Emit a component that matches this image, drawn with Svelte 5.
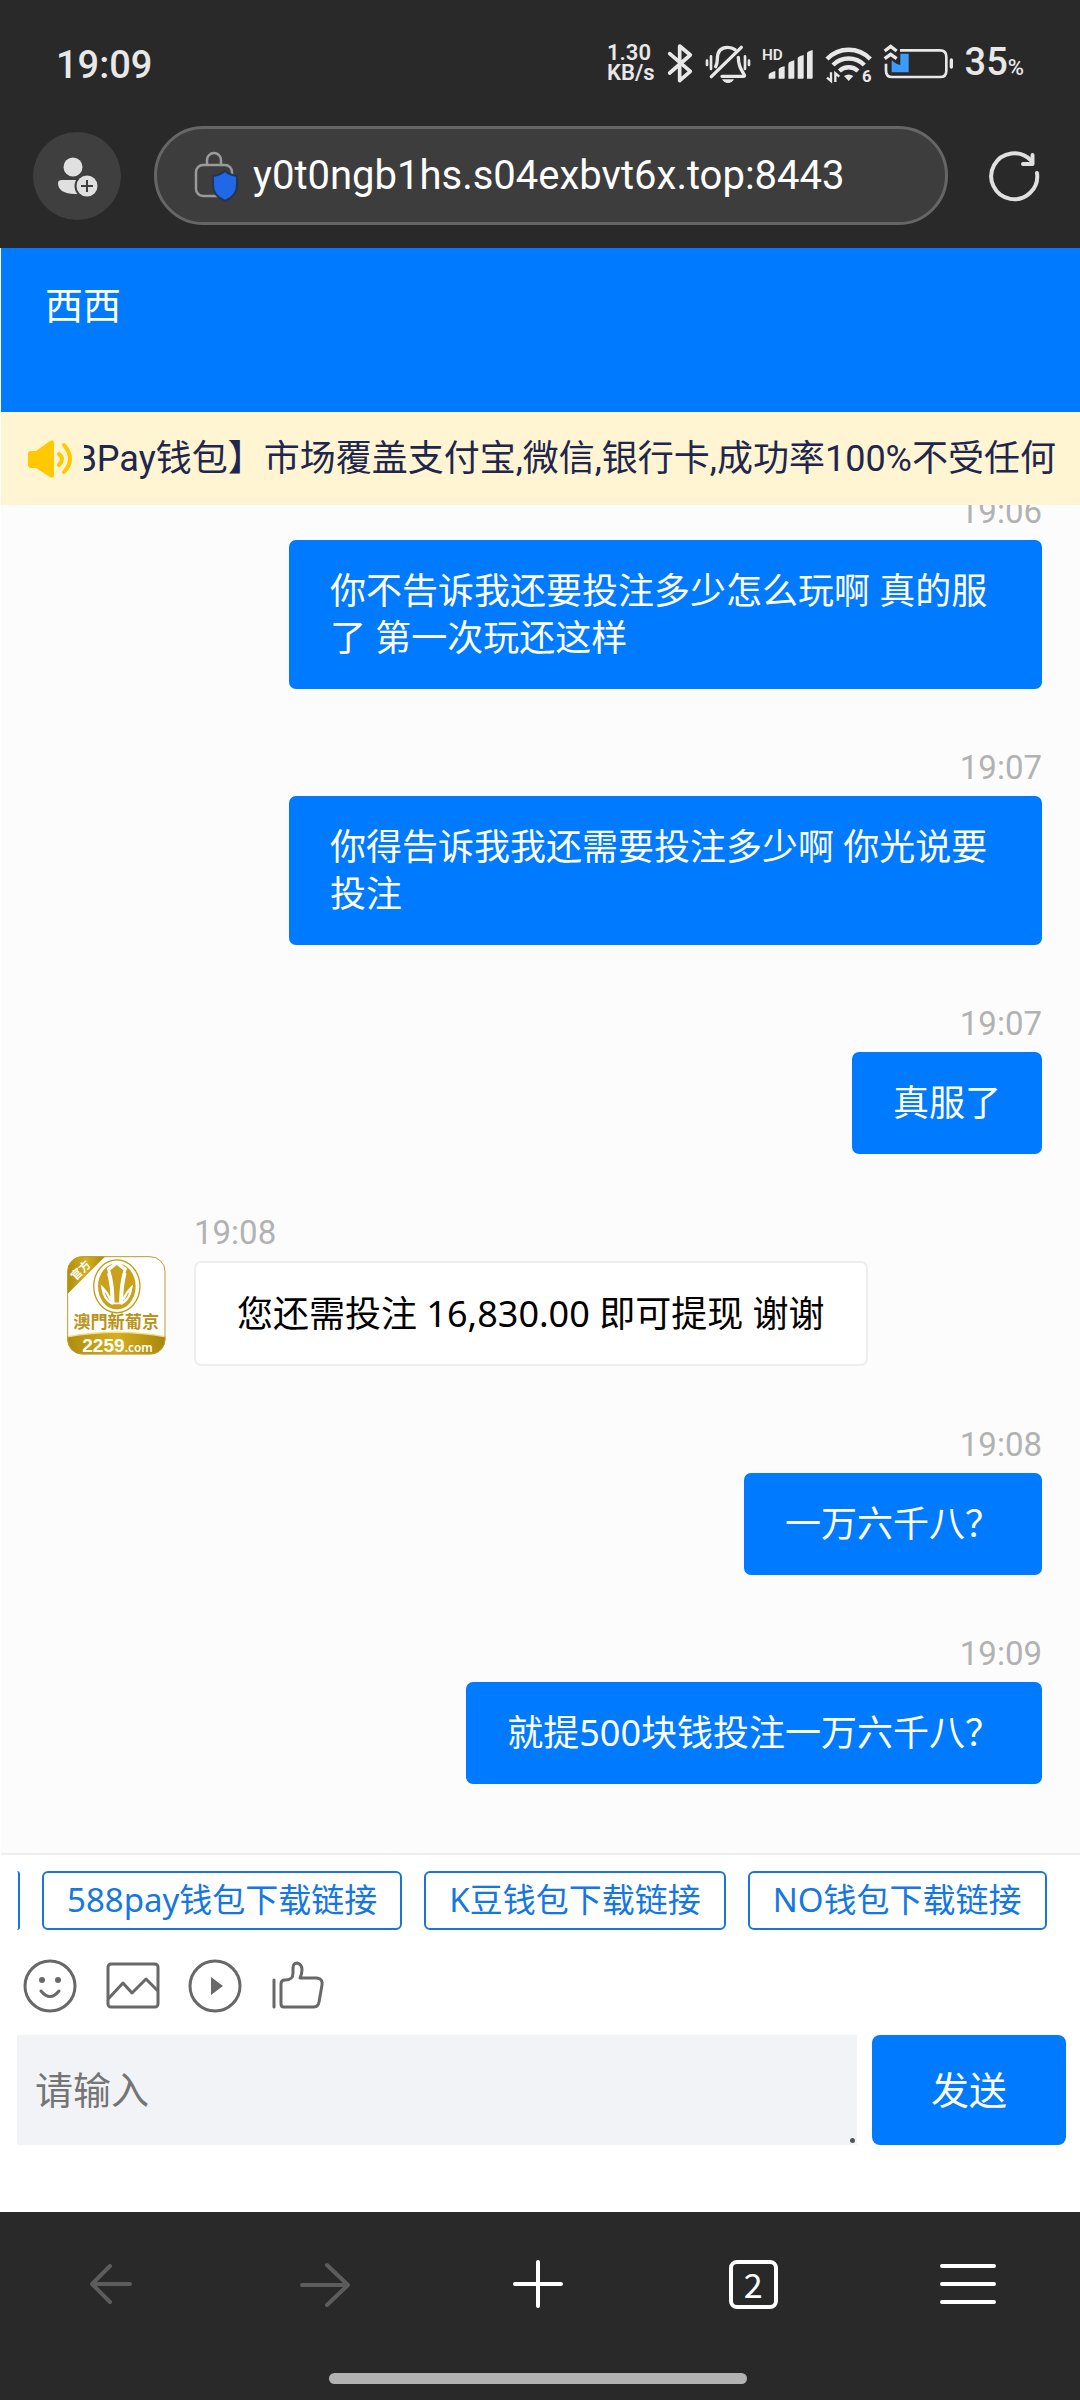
<script>
  const messages = [
    { time: '19:06', text: '你不告诉我还要投注多少怎么玩啊 真的服了 第一次玩还这样', mine: true },
    { time: '19:07', text: '你得告诉我我还需要投注多少啊 你光说要投注', mine: true },
    { time: '19:07', text: '真服了', mine: true },
    { time: '19:08', text: '您还需投注 16,830.00 即可提现 谢谢', mine: false },
    { time: '19:08', text: '一万六千八？', mine: true },
    { time: '19:09', text: '就提500块钱投注一万六千八？', mine: true }
  ];
  const links = ['588pay钱包下载链接', 'K豆钱包下载链接', 'NO钱包下载链接'];
  let draft = $state('');
</script>

<div class="screen">
  <header class="browser">
    <div class="status">
      <time class="clock">19:09</time>
      <div class="indicators">
        <div class="speed"><span>1.30</span><span>KB/s</span></div>
        <svg width="28" height="40" viewBox="246 70 84 120" fill="none" stroke="#e8e8e8" stroke-width="11" stroke-linecap="round" stroke-linejoin="round" aria-hidden="true">
          <path d="M257 102 319 155 287 183V79L319 106 257 160" />
        </svg>
        <svg width="46" height="40" viewBox="369 70 138 120" fill="none" stroke="#e8e8e8" stroke-width="10" stroke-linecap="round" aria-hidden="true">
          <path d="M401 141Q406 132 406 118C406 92 420 83 437 83Q450 83 459 90" />
          <path d="M469 113C469 135 475 146 487 166Q489 170 484 170H420" stroke-linejoin="round" />
          <path d="M388 171 478 83" />
          <path d="M420 179H456Q450 190 438 190T420 179Z" fill="#e8e8e8" stroke="none" />
          <path d="M375 123V136M387 110V148M489 110V148M501 123V136" stroke-width="8" />
        </svg>
        <svg width="52" height="40" viewBox="538 70 156 120" fill="#e8e8e8" aria-hidden="true">
          <text x="538" y="120" class="hd">HD</text>
          <path d="M558 177V165Q560 159 578 154V174Q578 177 575 177ZM588 177V149Q590 143 606 140V174Q606 177 603 177ZM617 177V133Q618 126 635 122V174Q635 177 632 177ZM645 177V116Q646 110 663 106V174Q663 177 660 177ZM673 177V101Q674 95 690 91V174Q690 177 687 177Z" />
        </svg>
        <svg width="48" height="40" viewBox="726 70 144 120" fill="none" stroke="#e8e8e8" stroke-width="13" aria-hidden="true">
          <path d="M732 118C768 81 826 81 862 118" />
          <path d="M750 136C776 110 818 110 844 136" />
          <path d="M769 154C785 139 809 139 825 154" />
          <path d="M783 169Q797 160 811 169L797 184Z" fill="#e8e8e8" stroke="none" />
          <path d="M744 158V184L732 174M757 187V161L769 171" stroke-width="7" />
          <text x="837" y="187" class="six">6</text>
        </svg>
        <svg width="70" height="40" viewBox="910 70 210 120" fill="none" stroke="#e8e8e8" stroke-width="8" aria-hidden="true">
          <path d="M958 92H1078Q1097 92 1097 111V153Q1097 172 1078 172H935Q916 172 916 153V132" />
          <path d="M1112 121V142" stroke-width="10" stroke-linecap="round" />
          <path d="M959 102H984V158H933V122L947 132 959 136Z" fill="#3b9bff" stroke="none" />
          <path d="M912 94 930 80 948 94M912 117 930 104 948 117" stroke-width="10" />
        </svg>
        <div class="battery">35<small>%</small></div>
      </div>
    </div>

    <div class="address">
      <button class="profile" aria-label="账户">
        <svg width="88" height="88" viewBox="0 0 88 88" aria-hidden="true">
          <circle cx="40" cy="35" r="9.5" fill="#e0e0e0" />
          <path d="M29 48H52V62H42C31 62 25 58 25 51Q25 48 29 48Z" fill="#e0e0e0" />
          <circle cx="54" cy="54" r="12.5" fill="#3f3f3f" />
          <circle cx="54" cy="54" r="10.5" fill="#e0e0e0" />
          <path d="M54 48V60M48 54H60" stroke="#3f3f3f" stroke-width="2" />
        </svg>
      </button>
      <a class="url" href="#top">
        <svg width="48" height="54" viewBox="0 0 48 54" fill="none" aria-hidden="true">
          <path d="M14 16V11A7 7 0 0 1 28 11V16" stroke="#9a9a9a" stroke-width="2.5" />
          <rect x="3" y="16" width="36" height="31" rx="7" stroke="#9a9a9a" stroke-width="2.5" />
          <path d="M32 22Q37 26 44 27V36C44 44 39 49 32 52C25 49 20 44 20 36V27Q27 26 32 22Z" fill="#2068e8" stroke="#24354f" stroke-width="2" />
        </svg>
        <span>y0t0ngb1hs.s04exbvt6x.top:8443</span>
      </a>
      <button class="reload" aria-label="刷新">
        <svg width="66" height="66" viewBox="-33 -33 66 66" fill="none" stroke="#e0e0e0" stroke-width="4" stroke-linecap="round" stroke-linejoin="round" aria-hidden="true">
          <path d="M23 -3A23 23 0 1 1 17 -15.500" />
          <path d="M18.500 -21V-12H9" />
        </svg>
      </button>
    </div>
  </header>

  <main class="page">
    <h1 class="title">西西</h1>

    <div class="notice">
      <svg width="46" height="40" viewBox="0 0 46 40" aria-hidden="true">
        <path d="M4 12H9L23 2Q27 0 27 4V36Q27 40 23 38L9 29H4Q1 29 1 26V15Q1 12 4 12Z" fill="#ffc800" />
        <path d="M32 15Q38 20 32 26" fill="none" stroke="#ffc800" stroke-width="4" stroke-linecap="round" />
        <path d="M37 6Q49 20 37 33" fill="none" stroke="#ffc800" stroke-width="4" stroke-linecap="round" />
      </svg>
      <div class="ticker"><span>BPay钱包】市场覆盖支付宝,微信,银行卡,成功率100%不受任何</span></div>
    </div>

    <section class="chat">
      <ul class="list">
        {#each messages as m}
          <li class="item" class:mine={m.mine}>
            {#if !m.mine}
              <svg class="avatar" viewBox="80 167 300 300" role="img" aria-label="2259.com">
                <defs>
                  <clipPath id="avatar-shape"><rect x="81" y="168" width="297" height="297" rx="46" /></clipPath>
                  <linearGradient id="gold" x1="0" x2="1" y1="0" y2="0">
                    <stop offset="0" stop-color="#b08c0c" />
                    <stop offset="0.5" stop-color="#d6ae1e" />
                    <stop offset="1" stop-color="#a8860c" />
                  </linearGradient>
                </defs>
                <g clip-path="url(#avatar-shape)">
                  <rect x="80" y="167" width="300" height="300" fill="#fff" />
                  <path d="M80 167H197L80 284Z" fill="url(#gold)" />
                  <path d="M80 412Q230 384 380 412V467H80Z" fill="url(#gold)" />
                  <path d="M80 412Q230 384 380 412" fill="none" stroke="#f3de86" stroke-width="4" />
                </g>
                <rect x="82" y="169" width="295" height="295" rx="45" fill="none" stroke="#bd9a2c" stroke-width="3" />
                <ellipse cx="231" cy="259" rx="70" ry="80" fill="#fff" stroke="#c09c1c" stroke-width="4" />
                <ellipse cx="231" cy="259" rx="57" ry="70" fill="#c9a11a" />
                <path d="M231 182 262 204Q244 250 245 313H217Q218 250 200 204Z" fill="#fff" />
                <path d="M231 194 251 210Q238 250 238 308H224Q224 250 211 210Z" fill="#c9a11a" />
                <path d="M205 219Q216 260 215 310Q193 300 187 263Q203 278 212 300M257 219Q246 260 247 310Q269 300 275 263Q259 278 250 300" fill="none" stroke="#fff" stroke-width="7" />
                <text x="0" y="0" class="badge" transform="translate(106 243) rotate(-45)">官方</text>
                <text x="229" y="386" class="brand">澳門新葡京</text>
                <text x="126" y="457" class="site">2259<tspan class="com">.com</tspan></text>
              </svg>
            {/if}
            <div class="content">
              <time>{m.time}</time>
              <p class="bubble">{m.text}</p>
            </div>
          </li>
        {/each}
      </ul>
    </section>

    <form class="composer" onsubmit={(e) => e.preventDefault()}>
      <div class="chips">
        <span class="edge" aria-hidden="true"></span>
        {#each links as link}
          <button type="button" class="chip">{link}</button>
        {/each}
      </div>
      <div class="tools">
        <button type="button" aria-label="表情">
          <svg viewBox="0 0 54 54" aria-hidden="true">
            <circle cx="27" cy="27" r="25" />
            <circle cx="19" cy="21" r="3" class="solid" />
            <circle cx="35" cy="21" r="3" class="solid" />
            <path d="M18 32Q27 43 36 32" />
          </svg>
        </button>
        <button type="button" aria-label="图片">
          <svg viewBox="0 0 54 54" aria-hidden="true">
            <rect x="3" y="5" width="50" height="43" rx="3" />
            <path d="M4 39 18 24 27 34 41 20 52 31" />
          </svg>
        </button>
        <button type="button" aria-label="视频">
          <svg viewBox="0 0 54 54" aria-hidden="true">
            <circle cx="28" cy="27" r="25" />
            <path d="M24 18 36 27 24 36Z" class="solid" />
          </svg>
        </button>
        <button type="button" aria-label="点赞">
          <svg viewBox="0 0 54 54" aria-hidden="true">
            <path d="M5 21V48" />
            <path d="M12 25Q12 21 16 21C22 21 24 19 24 14V9Q24 4 28 4Q33 5 33 11Q33 15 31 19H48Q54 20 53 26L50 43Q49 48 45 48H15Q12 48 12 45Z" />
          </svg>
        </button>
      </div>
      <div class="entry">
        <div class="field">
          <textarea aria-label="消息" placeholder="请输入" rows="1" bind:value={draft}></textarea>
          <span class="grip"></span>
        </div>
        <button type="submit" class="send">发送</button>
      </div>
    </form>
  </main>

  <footer class="dock">
    <nav>
      <button aria-label="后退" disabled>
        <svg viewBox="-30 -30 60 60" stroke="#5c5c5c" aria-hidden="true"><path d="M22 0H-16M2 -18-16 0 2 18" /></svg>
      </button>
      <button aria-label="前进" disabled>
        <svg viewBox="-30 -30 60 60" stroke="#5c5c5c" aria-hidden="true"><path d="M-21 1H25M4 -19 25 1 4 21" /></svg>
      </button>
      <button aria-label="新标签页">
        <svg viewBox="-30 -30 60 60" stroke="#fff" aria-hidden="true"><path d="M-23 0H23M0 -22V22" /></svg>
      </button>
      <button aria-label="标签页"><span class="tabs">2</span></button>
      <button aria-label="菜单">
        <svg viewBox="-30 -30 60 60" stroke="#fff" aria-hidden="true"><path d="M-26 -18H26M-26 0H26M-26 18H26" /></svg>
      </button>
    </nav>
    <div class="home"></div>
  </footer>
</div>

<style>
  :global(body) {
    margin: 0;
    background: #292929;
  }
  .screen,
  button,
  textarea {
    font-family: 'Noto Sans', 'Noto Sans CJK SC', sans-serif;
  }
  .screen {
    display: flex;
    flex-direction: column;
    min-height: 100vh;
    background: #292929;
  }
  button {
    padding: 0;
    border: 0;
    background: none;
    color: inherit;
  }
  svg {
    display: block;
    flex: none;
    overflow: visible;
  }

  .browser {
    padding-bottom: 23px;
    font-family: Roboto, sans-serif;
  }
  .status {
    display: flex;
    align-items: center;
    justify-content: space-between;
    height: 126px;
    padding: 0 56px;
    box-sizing: border-box;
    color: #e8e8e8;
  }
  .clock,
  .battery {
    padding-top: 4px;
    font-size: 38px;
    line-height: 48px;
    font-weight: 500;
  }
  .indicators {
    display: flex;
    align-items: center;
    gap: 11px;
  }
  .speed {
    display: flex;
    flex-direction: column;
    font-size: 22px;
    line-height: 20px;
    font-weight: 600;
  }
  .hd {
    font-size: 46px;
    font-weight: 600;
  }
  .six {
    font-size: 50px;
    font-weight: 700;
    stroke: none;
    fill: #e8e8e8;
  }
  .battery small {
    font-size: 22px;
  }
  .address {
    display: flex;
    align-items: center;
    gap: 33px;
    padding: 0 33px;
  }
  .profile {
    border-radius: 50%;
    background: #3f3f3f;
  }
  .url {
    display: flex;
    flex: 1;
    align-items: center;
    gap: 12px;
    min-width: 0;
    height: 99px;
    padding: 0 36px;
    box-sizing: border-box;
    border: 3px solid #666;
    border-radius: 50px;
    background: #3d3d3d;
    color: #fff;
    font-size: 40px;
    line-height: 48px;
    text-decoration: none;
    white-space: nowrap;
  }

  .page {
    display: flex;
    flex: 1;
    flex-direction: column;
    padding-left: 1px;
    background: #fff;
  }
  .title {
    height: 164px;
    margin: 0;
    padding: 28px 44px;
    box-sizing: border-box;
    background: #007aff;
    color: #fff;
    font-size: 38px;
    line-height: 56px;
    font-weight: 400;
  }
  .notice {
    display: flex;
    align-items: center;
    gap: 11px;
    height: 93px;
    padding: 0 24px 0 26px;
    background: #fff5d2;
    color: #20264d;
  }
  .ticker {
    display: flex;
    flex: 1;
    justify-content: flex-end;
    min-width: 0;
    overflow: hidden;
    font-family: Roboto, 'Noto Sans CJK SC', sans-serif;
    font-size: 36px;
    line-height: 54px;
    white-space: nowrap;
  }
  .chat {
    flex: 1;
    overflow: hidden;
    padding: 0 38px 69px 37px;
    background: #fcfcfc;
  }
  .list {
    display: flex;
    flex-direction: column;
    gap: 60px;
    margin: -12px 0 0;
    padding: 0;
    list-style: none;
  }
  .item {
    display: flex;
    gap: 28px;
    padding-left: 29px;
  }
  .mine {
    justify-content: flex-end;
    padding-left: 0;
  }
  .avatar {
    width: 99px;
    height: 99px;
    margin-top: 42px;
  }
  .badge {
    fill: #fff;
    font: 700 34px 'Noto Sans CJK TC', sans-serif;
  }
  .brand {
    fill: #b8941a;
    font: 700 52px 'Noto Sans CJK TC', sans-serif;
    text-anchor: middle;
  }
  .site {
    fill: #fff;
    font: 700 58px 'Liberation Sans', sans-serif;
  }
  .com {
    font: 600 36px 'Noto Sans', sans-serif;
  }
  .content {
    display: flex;
    flex-direction: column;
    align-items: flex-start;
    gap: 9px;
  }
  .mine .content {
    align-items: flex-end;
    max-width: 75%;
  }
  .content time {
    color: #b2b2b2;
    font-family: Roboto, sans-serif;
    font-size: 33px;
    line-height: 38px;
  }
  .bubble {
    margin: 0;
    padding: 27px 41px;
    border: 2px solid #eee;
    border-radius: 7px;
    background: #fff;
    color: #000;
    font-size: 36px;
    line-height: 47px;
  }
  .mine .bubble {
    padding: 27px 41px 28px;
    border: 0;
    background: #007aff;
    color: #fff;
  }

  .composer {
    padding: 16px 14px 67px 16px;
    border-top: 2px solid #eee;
  }
  .chips {
    display: flex;
    gap: 22px;
    overflow: hidden;
  }
  .edge {
    flex: none;
    width: 1px;
    border-right: 2px solid #1976d2;
    border-radius: 0 5px 5px 0;
  }
  .chip {
    flex: none;
    height: 59px;
    padding: 0 23px 2px;
    border: 2px solid #1976d2;
    border-radius: 6px;
    color: #1577e0;
    font-size: 33px;
    line-height: 48px;
    white-space: nowrap;
  }
  .tools {
    display: flex;
    gap: 28px;
    padding: 29px 6px 22px;
  }
  .tools svg {
    width: 54px;
    height: 54px;
    fill: none;
    stroke: #686868;
    stroke-width: 3;
    stroke-linecap: round;
    stroke-linejoin: round;
  }
  .tools .solid {
    fill: #686868;
    stroke: none;
  }
  .entry {
    display: flex;
    gap: 15px;
  }
  .field {
    position: relative;
    display: flex;
    flex: 1;
  }
  textarea {
    flex: 1;
    width: 100%;
    height: 110px;
    padding: 27px 18px;
    box-sizing: border-box;
    border: 0;
    background: #f2f3f7;
    color: #222;
    font-size: 38px;
    line-height: 54px;
    resize: none;
  }
  textarea::placeholder {
    color: #757575;
  }
  .grip {
    position: absolute;
    right: 2px;
    bottom: 2px;
    width: 5px;
    height: 5px;
    border-radius: 50%;
    background: #555;
  }
  .send {
    width: 194px;
    padding-bottom: 2px;
    border-radius: 8px;
    background: #007aff;
    color: #fff;
    font-size: 38px;
    line-height: 54px;
  }

  .dock {
    padding-right: 4px;
  }
  .dock nav {
    display: grid;
    grid-template-columns: repeat(5, 1fr);
    height: 144px;
  }
  .dock button {
    display: flex;
    align-items: center;
    justify-content: center;
  }
  .dock svg {
    width: 60px;
    height: 60px;
    fill: none;
    stroke-width: 4;
    stroke-linecap: round;
    stroke-linejoin: round;
  }
  .tabs {
    width: 41px;
    height: 41px;
    border: 4px solid #fff;
    border-radius: 8px;
    color: #fff;
    font-family: 'Noto Sans CJK SC', sans-serif;
    font-size: 34px;
    line-height: 39px;
  }
  .home {
    width: 418px;
    height: 11px;
    margin: 17px auto 16px;
    border-radius: 6px;
    background: #b2b2b2;
  }
</style>
